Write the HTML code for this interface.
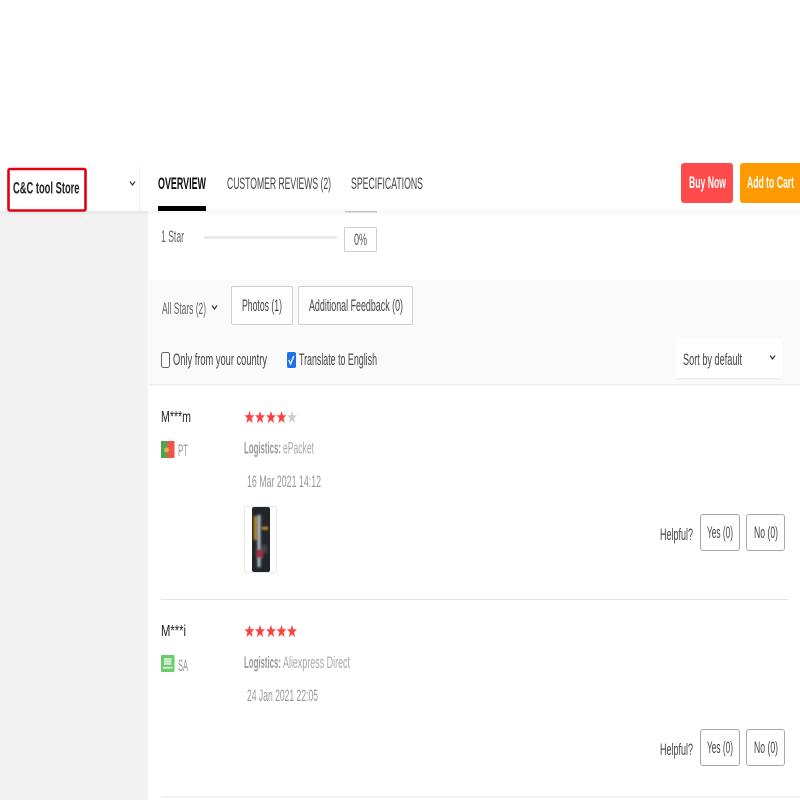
<!DOCTYPE html>
<html>
<head>
<meta charset="utf-8">
<style>
html,body{margin:0;padding:0;background:#fff;width:800px;height:800px;overflow:hidden}
svg{display:block}
text{font-family:"Liberation Sans",sans-serif;font-size:16.5px;fill:#444}
.b{font-weight:bold}
</style>
</head>
<body>
<svg width="800" height="800" viewBox="0 0 800 800" xmlns="http://www.w3.org/2000/svg">
<defs>
<filter id="s" x="-5%" y="-5%" width="110%" height="110%"><feGaussianBlur stdDeviation="0.35"/></filter>
<filter id="i" x="-20%" y="-20%" width="140%" height="140%"><feGaussianBlur stdDeviation="1"/></filter>
<filter id="sh" x="-5%" y="-200%" width="110%" height="500%"><feGaussianBlur stdDeviation="1.5"/></filter>
<path id="st" d="M0,-6.6 L1.35,-2.2 L4.9,-2.2 L2.05,0.7 L3.1,5.6 L0,2.7 L-3.1,5.6 L-2.05,0.7 L-4.9,-2.2 L-1.35,-2.2 Z"/>
</defs>
<rect width="800" height="800" fill="#fff"/>
<rect x="0" y="211" width="147" height="589" fill="#f2f2f2"/>
<rect x="147" y="211" width="2" height="589" fill="#f8f8f8"/>
<rect x="149" y="280" width="651" height="105" fill="#fafafa"/>
<rect x="149" y="384" width="651" height="1.500" fill="#ececec"/>
<rect x="0" y="211" width="800" height="2" fill="#000" opacity=".07" filter="url(#sh)"/>
<rect x="345" y="211" width="32" height="1.500" fill="#c4c4c4"/>

<g filter="url(#s)">
<rect x="8.500" y="169" width="77" height="41.500" rx="1.500" fill="#fff" stroke="#e60012" stroke-width="2.600"/>
<text x="13" y="193.500" class="b" style="fill:#222" textLength="66.500" lengthAdjust="spacingAndGlyphs">C&amp;C tool Store</text>
<path d="M130 181.500l2.500 3.500 2.500-3.500" fill="none" stroke="#333" stroke-width="1.200"/>
<rect x="139" y="165" width="1" height="46" fill="#f0f0f0"/>
<text x="158" y="189" class="b" style="font-size:17px;fill:#111" textLength="48" lengthAdjust="spacingAndGlyphs">OVERVIEW</text>
<rect x="158" y="206" width="48" height="5" fill="#000"/>
<text x="227" y="189" style="font-size:17px" textLength="104" lengthAdjust="spacingAndGlyphs">CUSTOMER REVIEWS (2)</text>
<text x="351" y="189" style="font-size:17px" textLength="72" lengthAdjust="spacingAndGlyphs">SPECIFICATIONS</text>
<rect x="681" y="163" width="52" height="40" rx="3" fill="#ff4b4b"/>
<text x="689" y="188" class="b" style="font-size:17px;fill:#fff" textLength="37" lengthAdjust="spacingAndGlyphs">Buy Now</text>
<path d="M743 163H800V203H743a3 3 0 0 1-3-3V166a3 3 0 0 1 3-3Z" fill="#ff9a00"/>
<text x="747" y="188" class="b" style="font-size:17px;fill:#fff" textLength="47" lengthAdjust="spacingAndGlyphs">Add to Cart</text>

<text x="161" y="242" style="fill:#666" textLength="23" lengthAdjust="spacingAndGlyphs">1 Star</text>
<rect x="204" y="236" width="133" height="3" rx="1.500" fill="#e9e9e9"/>
<rect x="344.500" y="227.500" width="32" height="24" rx="1.500" fill="#fff" stroke="#cfcfcf"/>
<text x="354" y="245" style="fill:#555" textLength="13" lengthAdjust="spacingAndGlyphs">0%</text>

<text x="162" y="314" style="fill:#666" textLength="44" lengthAdjust="spacingAndGlyphs">All Stars (2)</text>
<path d="M212 305.500l2.500 3.500 2.500-3.500" fill="none" stroke="#333" stroke-width="1.200"/>
<rect x="231.500" y="286.500" width="61" height="38" rx="1.500" fill="#fff" stroke="#cfcfcf"/>
<text x="242" y="311" textLength="40" lengthAdjust="spacingAndGlyphs">Photos (1)</text>
<rect x="298.500" y="286.500" width="114" height="38" rx="1.500" fill="#fff" stroke="#cfcfcf"/>
<text x="309" y="311" textLength="94" lengthAdjust="spacingAndGlyphs">Additional Feedback (0)</text>

<rect x="161.500" y="352.500" width="8" height="15" rx="2" fill="#fff" stroke="#666"/>
<text x="173" y="365" textLength="94" lengthAdjust="spacingAndGlyphs">Only from your country</text>
<rect x="287" y="352" width="9" height="16" rx="2" fill="#1a73e8"/>
<path d="M288.800 360l1.800 4 3.200-8" fill="none" stroke="#fff" stroke-width="1.300"/>
<text x="299" y="365" textLength="78" lengthAdjust="spacingAndGlyphs">Translate to English</text>

<rect x="676" y="339" width="106" height="40" fill="#fff"/>
<rect x="676" y="378" width="106" height="1.500" fill="#eeeeee"/>
<text x="683" y="365" textLength="59" lengthAdjust="spacingAndGlyphs">Sort by default</text>
<path d="M770 355.500l2.500 3.500 2.500-3.500" fill="none" stroke="#333" stroke-width="1.200"/>

<!-- review 1 -->
<text x="161" y="422" style="font-size:16px;fill:#222" textLength="30" lengthAdjust="spacingAndGlyphs">M***m</text>
<use href="#st" x="249.500" y="417.500" fill="#ff4040"/>
<use href="#st" x="260" y="417.500" fill="#ff4040"/>
<use href="#st" x="271" y="417.500" fill="#ff4040"/>
<use href="#st" x="281.500" y="417.500" fill="#ff4040"/>
<use href="#st" x="292" y="417.500" fill="#cfcfcf"/>
<rect x="161" y="441" width="6" height="17" fill="#4aa84a"/>
<rect x="167" y="441" width="7.500" height="17" fill="#f0554a"/>
<circle cx="166.500" cy="450" r="2.500" fill="#e0b050"/>
<text x="178" y="456" style="fill:#999" textLength="10" lengthAdjust="spacingAndGlyphs">PT</text>
<text x="244" y="453.500" class="b" style="fill:#999" textLength="37" lengthAdjust="spacingAndGlyphs">Logistics:</text>
<text x="283" y="453.500" style="fill:#aaa" textLength="31" lengthAdjust="spacingAndGlyphs">ePacket</text>
<text x="247" y="487" style="fill:#999" textLength="74" lengthAdjust="spacingAndGlyphs">16 Mar 2021 14:12</text>
<rect x="244.500" y="506.500" width="32" height="66" rx="1.500" fill="#fff" stroke="#e8e8e8"/>
<rect x="252" y="507" width="18" height="65" rx="2" fill="#23282b"/>
<g filter="url(#i)">
<rect x="254" y="516" width="2.500" height="24" fill="#d99a1e"/>
<rect x="257.500" y="515" width="3" height="52" fill="#b9c4c8"/>
<rect x="262" y="527" width="6" height="2.500" fill="#e3a51f"/>
<rect x="256" y="549" width="7" height="9" fill="#9c3140"/>
<rect x="262" y="545" width="5" height="8" fill="#3c464c"/>
</g>

<text x="660" y="540" textLength="33" lengthAdjust="spacingAndGlyphs">Helpful?</text>
<rect x="700.500" y="514.500" width="39" height="36" rx="2.500" fill="#fff" stroke="#a8a8a8"/>
<text x="707" y="538" textLength="26" lengthAdjust="spacingAndGlyphs">Yes (0)</text>
<rect x="746.500" y="514.500" width="38" height="36" rx="2.500" fill="#fff" stroke="#a8a8a8"/>
<text x="754" y="538" textLength="24" lengthAdjust="spacingAndGlyphs">No (0)</text>
<rect x="161" y="599" width="627" height="1" fill="#e4e4e4"/>

<!-- review 2 -->
<text x="161" y="636" style="font-size:16px;fill:#222" textLength="25" lengthAdjust="spacingAndGlyphs">M***i</text>
<use href="#st" x="249.500" y="631.500" fill="#ff4040"/>
<use href="#st" x="260" y="631.500" fill="#ff4040"/>
<use href="#st" x="271" y="631.500" fill="#ff4040"/>
<use href="#st" x="281.500" y="631.500" fill="#ff4040"/>
<use href="#st" x="292" y="631.500" fill="#ff4040"/>
<rect x="161" y="655" width="13.500" height="17" rx="1" fill="#6ccb6c"/>
<rect x="164" y="658" width="7.500" height="7" fill="#c5eac5"/>
<rect x="163" y="667" width="9.500" height="1.500" fill="#e8f7e8"/>
<text x="178" y="671" style="fill:#999" textLength="10" lengthAdjust="spacingAndGlyphs">SA</text>
<text x="244" y="668" class="b" style="fill:#999" textLength="37" lengthAdjust="spacingAndGlyphs">Logistics:</text>
<text x="283" y="668" style="fill:#aaa" textLength="67" lengthAdjust="spacingAndGlyphs">Aliexpress Direct</text>
<text x="247" y="701" style="fill:#999" textLength="71" lengthAdjust="spacingAndGlyphs">24 Jan 2021 22:05</text>

<text x="660" y="755" textLength="33" lengthAdjust="spacingAndGlyphs">Helpful?</text>
<rect x="700.500" y="729.500" width="39" height="36" rx="2.500" fill="#fff" stroke="#a8a8a8"/>
<text x="707" y="753" textLength="26" lengthAdjust="spacingAndGlyphs">Yes (0)</text>
<rect x="746.500" y="729.500" width="38" height="36" rx="2.500" fill="#fff" stroke="#a8a8a8"/>
<text x="754" y="753" textLength="24" lengthAdjust="spacingAndGlyphs">No (0)</text>
<rect x="161" y="796.500" width="639" height="1" fill="#e4e4e4"/>
</g>
</svg>
</body>
</html>
